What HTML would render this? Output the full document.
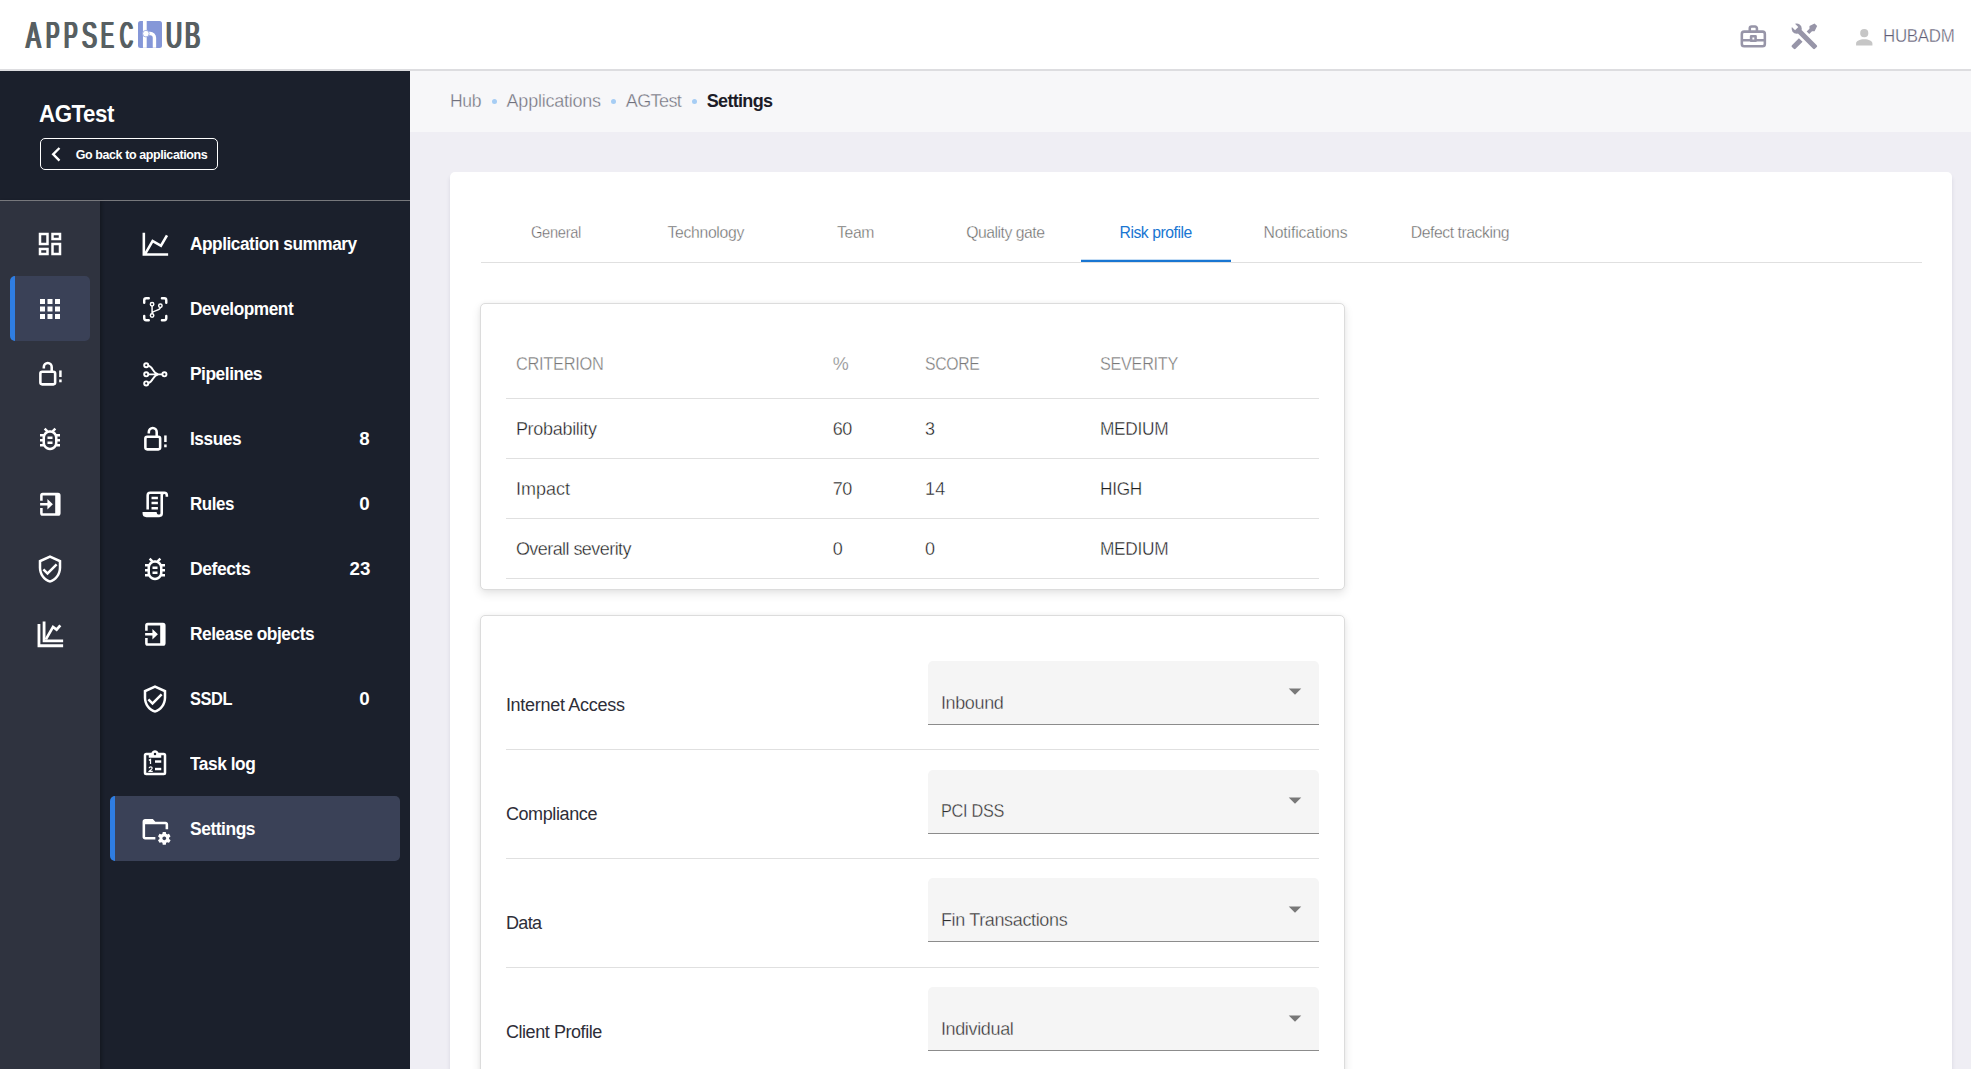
<!DOCTYPE html>
<html lang="en">
<head>
<meta charset="utf-8">
<title>AppSec.Hub - Settings</title>
<style>
*{box-sizing:border-box;margin:0;padding:0}
html,body{width:1971px;height:1069px;overflow:hidden}
body{font-family:"Liberation Sans",sans-serif;background:#efeef4;color:#333;position:relative}
.abs{position:absolute}
#hdr{left:0;top:0;width:1971px;height:69px;background:#fff}
#hdrline{left:0;top:69px;width:1971px;height:2px;background:#dddde0}
#side{left:0;top:71px;width:410px;height:998px;background:#1b202c}
#mini{left:0;top:201px;width:100px;height:868px;background:#2f333f;box-shadow:2px 0 3px rgba(0,0,0,.25)}
#sideline{left:0;top:200px;width:410px;height:1px;background:#77787c}
#crumb{left:410px;top:71px;width:1561px;height:61px;background:#f7f7f9}
#card{left:450px;top:172px;width:1502px;height:920px;background:#fff;border-radius:5px;box-shadow:0 4px 4px rgba(40,40,80,.12)}
.t{position:absolute;white-space:nowrap;line-height:1}
.act{background:#3a4157;border-left:5px solid #2f7de1;border-radius:5px}
#backbtn{left:40px;top:138px;width:178px;height:32px;border:1px solid #fff;border-radius:5px}
.dot{width:5.4px;height:5.4px;border-radius:50%;background:#a6cdf4;top:98.6px}
#tabline{left:481px;top:262px;width:1441px;height:1px;background:#e0e0e0}
#tabact{left:1081px;top:260px;width:150px;height:2px;background:#1976d2;box-shadow:0 -1px 0 rgba(25,118,210,.25)}
.pcard{left:480px;width:865px;background:#fff;border:1px solid #dcdcdc;border-radius:5px;box-shadow:0 4px 10px rgba(0,0,0,.10),0 0 4px rgba(0,0,0,.04)}
.hl{left:506px;width:813px;height:1px;background:#e0e0e0}
.sel{left:928px;width:391px;height:64px;background:#f5f5f5;border-radius:5px 5px 0 0;border-bottom:1px solid #8c8c8c}
svg{position:absolute;overflow:visible}
.lg{position:absolute;top:17px;font-size:37.6px;line-height:1;color:#575f62;transform-origin:0 0;white-space:nowrap}
</style>
</head>
<body>
<div id="hdr" class="abs"></div>
<div id="hdrline" class="abs"></div>
<div id="side" class="abs"></div>
<div id="mini" class="abs"></div>
<div id="sideline" class="abs"></div>
<div id="crumb" class="abs"></div>
<div id="card" class="abs"></div>
<div class="abs act" style="left:10px;top:276px;width:80px;height:65px"></div>
<div class="abs act" style="left:110px;top:796px;width:290px;height:65px"></div>
<div id="backbtn" class="abs"></div>
<div class="abs dot" style="left:491.7px"></div>
<div class="abs dot" style="left:610.7px"></div>
<div class="abs dot" style="left:691.6px"></div>
<div id="tabline" class="abs"></div>
<div id="tabact" class="abs"></div>
<div class="abs pcard" style="top:303px;height:287px"></div>
<div class="abs pcard" style="top:615px;height:480px"></div>
<div class="abs hl" style="top:398px"></div>
<div class="abs hl" style="top:458px"></div>
<div class="abs hl" style="top:518px"></div>
<div class="abs hl" style="top:578px"></div>
<div class="abs hl" style="top:749px"></div>
<div class="abs hl" style="top:858px"></div>
<div class="abs hl" style="top:967px"></div>
<div class="abs sel" style="top:661px"></div>
<div class="abs sel" style="top:770px"></div>
<div class="abs sel" style="top:878px"></div>
<div class="abs sel" style="top:987px"></div>
<div class="abs" style="left:138px;top:21px;width:24.2px;height:26.8px;background:#8597d8;border-radius:2.5px"></div><svg style="left:138px;top:21px" width="25" height="27" viewBox="138 21 25 27"><rect x="142.95" y="21" width="3.75" height="26.8" fill="#fff"/><path d="M146.5 33.45H150.1A4.35 4.35 0 0 1 154.45 37.800V47.800" fill="none" stroke="#fff" stroke-width="3.4"/><circle cx="145.9" cy="33.650" r="3.300" fill="#fff" stroke="#8f9fdc" stroke-width="0.8"/></svg>
<div id="logo"><span class="lg" style="left:25.75px;transform:translateY(-0.25px) scaleX(0.588);text-shadow:1.62px 0 0 #575f62,-1.62px 0 0 #575f62">A</span><span class="lg" style="left:46.05px;transform:translateY(-0.25px) scaleX(0.535);text-shadow:1.78px 0 0 #575f62,-1.78px 0 0 #575f62">P</span><span class="lg" style="left:64.13px;transform:translateY(-0.25px) scaleX(0.540);text-shadow:1.76px 0 0 #575f62,-1.76px 0 0 #575f62">P</span><span class="lg" style="left:82.46px;transform:translateY(-0.25px) scaleX(0.595);text-shadow:1.60px 0 0 #575f62,-1.60px 0 0 #575f62">S</span><span class="lg" style="left:101.12px;transform:translateY(-0.25px) scaleX(0.510);text-shadow:1.86px 0 0 #575f62,-1.86px 0 0 #575f62">E</span><span class="lg" style="left:120.25px;transform:translateY(-0.25px) scaleX(0.475);text-shadow:2.00px 0 0 #575f62,-2.00px 0 0 #575f62">C</span></div><div id="logo2"><span class="lg" style="left:165.88px;transform:translateY(-0.25px) scaleX(0.590);text-shadow:1.61px 0 0 #575f62,-1.61px 0 0 #575f62">U</span><span class="lg" style="left:185.13px;transform:translateY(-0.25px) scaleX(0.605);text-shadow:1.57px 0 0 #575f62,-1.57px 0 0 #575f62">B</span></div>
<svg style="left:35.00px;top:229.00px" width="30" height="30" viewBox="0 0 24 24" fill="#fff"><path d="M19,5V7H15V5H19M9,5V11H5V5H9M19,13V19H15V13H19M9,17V19H5V17H9M21,3H13V9H21V3M11,3H3V13H11V3M21,11H13V21H21V11M11,15H3V21H11V15Z"/></svg>
<svg style="left:35.00px;top:294.00px" width="30" height="30" viewBox="0 0 24 24" fill="#fff"><path d="M16,20H20V16H16M16,14H20V10H16M10,8H14V4H10M16,8H20V4H16M10,14H14V10H10M4,14H8V10H4M4,20H8V16H4M10,20H14V16H10M4,8H8V4H4V8Z"/></svg>
<svg style="left:34.65px;top:358.65px" width="30.7" height="30.7" viewBox="0 0 24 24" fill="#fff"><g fill="none" stroke="#fff" stroke-width="2"><rect x="4.2" y="9.9" width="11.55" height="9.95" rx="1.4"/><path d="M6.9 7.35V6.200a3.080 3.080 0 0 1 6.160 0V9.900"/></g><rect x="18.9" y="8.95" width="1.95" height="5.15"/><rect x="18.900" y="16" width="1.950" height="2.200"/></svg>
<svg style="left:35.00px;top:424.00px" width="30" height="30" viewBox="0 0 24 24" fill="#fff"><path d="M20,8H17.19C16.74,7.2 16.12,6.5 15.37,6L17,4.41L15.59,3L13.42,5.17C12.96,5.06 12.5,5 12,5C11.5,5 11.05,5.06 10.59,5.17L8.41,3L7,4.41L8.62,6C7.87,6.5 7.26,7.21 6.81,8H4V10H6.09C6.03,10.33 6,10.66 6,11V12H4V14H6V15C6,15.34 6.03,15.67 6.09,16H4V18H6.81C8.47,20.87 12.14,21.84 15,20.18C15.91,19.66 16.67,18.9 17.19,18H20V16H17.91C17.97,15.67 18,15.34 18,15V14H20V12H18V11C18,10.66 17.97,10.33 17.91,10H20V8M16,15A4,4 0 0,1 12,19A4,4 0 0,1 8,15V11A4,4 0 0,1 12,7A4,4 0 0,1 16,11V15M14,10V12H10V10H14M10,14H14V16H10V14Z"/></svg>
<svg style="left:34.65px;top:488.65px" width="30.7" height="30.7" viewBox="0 0 24 24" fill="#fff"><path d="M6,3H18A2,2 0 0 1 20,5V19A2,2 0 0 1 18,21H6A2,2 0 0 1 4,19V14.8H6V19H15.8V5H6V9.1H4V5A2,2 0 0 1 6,3ZM4,11H9.7V7.9L14,12L9.7,16V13H4Z"/></svg>
<svg style="left:35.00px;top:554.00px" width="30" height="30" viewBox="0 0 24 24" fill="#fff"><path d="M21,11C21,16.55 17.16,21.74 12,23C6.84,21.74 3,16.55 3,11V5L12,1L21,5V11M12,21C15.75,20 19,15.54 19,11.22V6.3L12,3.18L5,6.3V11.22C5,15.54 8.25,20 12,21M10,17L6,13L7.41,11.59L10,14.17L16.59,7.58L18,9"/></svg>
<svg style="left:34.65px;top:618.65px" width="30.7" height="30.7" viewBox="0 0 24 24" fill="#fff"><path d="M2 4H4.2V19.8H22V22H2Z"/><path d="M6 2H8.200V16H22V18.200H6Z"/><path d="M8.5 16L14.100 6.200 16.900 8.300 19.800 5" fill="none" stroke="#fff" stroke-width="2.1"/></svg>
<svg style="left:139.65px;top:228.65px" width="30.7" height="30.7" viewBox="0 0 24 24" fill="#fff"><path d="M16,11.78L20.24,4.45L21.97,5.45L16.74,14.5L10.23,10.75L5.46,19H22V21H2V3H4V17.54L9.5,8L16,11.78Z"/></svg>
<svg style="left:139.65px;top:293.65px" width="30.7" height="30.7" viewBox="0 0 24 24" fill="#fff"><g fill="none" stroke="#fff" stroke-width="1.9" stroke-linecap="round" stroke-linejoin="round"><path d="M3.3 6.850V4.800a1.500 1.500 0 0 1 1.500-1.500H6.850M17.150 3.300h1.900a1.500 1.500 0 0 1 1.500 1.500V6.850M20.550 17.150v1.900a1.500 1.500 0 0 1-1.500 1.500H17.150M6.850 20.550H4.800a1.500 1.500 0 0 1-1.500-1.500V17.150"/></g><g fill="none" stroke="#fff" stroke-width="1.15"><circle cx="9.45" cy="8" r="1.35"/><circle cx="9.450" cy="16.800" r="1.350"/><circle cx="15.930" cy="9.250" r="1.350"/><path d="M9.450 9.350v6.100M15.800 10.600C15.800 13.700 9.450 12.300 9.450 15.300"/></g></svg>
<svg style="left:139.65px;top:358.65px" width="30.7" height="30.7" viewBox="0 0 24 24" fill="#fff"><g fill="none" stroke="#fff" stroke-width="1.5"><circle cx="4.86" cy="4.86" r="1.6"/><circle cx="4.860" cy="12" r="1.600"/><circle cx="4.860" cy="19.100" r="1.600"/><circle cx="19.100" cy="12" r="1.600"/><path d="M6.460 12H17.500M6.400 5.200C10.800 6 9.500 11.400 14.500 12M6.400 18.800C10.800 18 9.500 12.600 14.500 12"/></g></svg>
<svg style="left:139.65px;top:423.65px" width="30.7" height="30.7" viewBox="0 0 24 24" fill="#fff"><g fill="none" stroke="#fff" stroke-width="2"><rect x="4.2" y="9.9" width="11.55" height="9.95" rx="1.4"/><path d="M6.9 7.35V6.200a3.080 3.080 0 0 1 6.160 0V9.900"/></g><rect x="18.9" y="8.95" width="1.95" height="5.15"/><rect x="18.900" y="16" width="1.950" height="2.200"/></svg>
<svg style="left:139.65px;top:488.65px" width="30.7" height="30.7" viewBox="0 0 24 24" fill="#fff"><path d="M15,20A1,1 0 0,0 16,19V4H8A1,1 0 0,0 7,5V16H5V5A3,3 0 0,1 8,2H19A3,3 0 0,1 22,5V6H20V5A1,1 0 0,0 19,4A1,1 0 0,0 18,5V9L18,19A3,3 0 0,1 15,22H5A3,3 0 0,1 2,19V18H13A2,2 0 0,0 15,20M9,6H14V8H9V6M9,10H14V12H9V10M9,14H14V16H9V14Z"/></svg>
<svg style="left:140.00px;top:554.00px" width="30" height="30" viewBox="0 0 24 24" fill="#fff"><path d="M20,8H17.19C16.74,7.2 16.12,6.5 15.37,6L17,4.41L15.59,3L13.42,5.17C12.96,5.06 12.5,5 12,5C11.5,5 11.05,5.06 10.59,5.17L8.41,3L7,4.41L8.62,6C7.87,6.5 7.26,7.21 6.81,8H4V10H6.09C6.03,10.33 6,10.66 6,11V12H4V14H6V15C6,15.34 6.03,15.67 6.09,16H4V18H6.81C8.47,20.87 12.14,21.84 15,20.18C15.91,19.66 16.67,18.9 17.19,18H20V16H17.91C17.97,15.67 18,15.34 18,15V14H20V12H18V11C18,10.66 17.97,10.33 17.91,10H20V8M16,15A4,4 0 0,1 12,19A4,4 0 0,1 8,15V11A4,4 0 0,1 12,7A4,4 0 0,1 16,11V15M14,10V12H10V10H14M10,14H14V16H10V14Z"/></svg>
<svg style="left:139.65px;top:618.65px" width="30.7" height="30.7" viewBox="0 0 24 24" fill="#fff"><path d="M6,3H18A2,2 0 0 1 20,5V19A2,2 0 0 1 18,21H6A2,2 0 0 1 4,19V14.8H6V19H15.8V5H6V9.1H4V5A2,2 0 0 1 6,3ZM4,11H9.7V7.9L14,12L9.7,16V13H4Z"/></svg>
<svg style="left:140.00px;top:684.00px" width="30" height="30" viewBox="0 0 24 24" fill="#fff"><path d="M21,11C21,16.55 17.16,21.74 12,23C6.84,21.74 3,16.55 3,11V5L12,1L21,5V11M12,21C15.75,20 19,15.54 19,11.22V6.3L12,3.18L5,6.3V11.22C5,15.54 8.25,20 12,21M10,17L6,13L7.41,11.59L10,14.17L16.59,7.58L18,9"/></svg>
<svg style="left:140.00px;top:749.00px" width="30" height="30" viewBox="0 0 24 24" fill="#fff"><path d="M19,3H14.82C14.4,1.84 13.3,1 12,1C10.7,1 9.6,1.84 9.18,3H5A2,2 0 0,0 3,5V19A2,2 0 0,0 5,21H19A2,2 0 0,0 21,19V5A2,2 0 0,0 19,3M12,3A1,1 0 0,1 13,4A1,1 0 0,1 12,5A1,1 0 0,1 11,4A1,1 0 0,1 12,3M7,7H17V5H19V19H5V5H7V7Z"/><rect x="12" y="9.05" width="5" height="1.95"/><rect x="12" y="15.050" width="5" height="1.950"/><g fill="none" stroke="#fff" stroke-width="1"><path d="M7.1 9.1L8.400 8.300V12.050"/><path d="M7.400 15.300C7.400 14 9.800 14 9.700 15.400C9.600 16.300 8.200 17 7.500 17.800H10.200"/></g></svg>
<svg style="left:139.65px;top:813.65px" width="30.7" height="30.7" viewBox="0 0 24 24" fill="#fff"><path d="M4 4C2.89 4 2 4.89 2 6V18C2 19.11 2.9 20 4 20H12V18H4V8H20V12H22V8C22 6.89 21.1 6 20 6H12L10 4M18 14C17.87 14 17.76 14.09 17.74 14.21L17.55 15.53C17.25 15.66 16.96 15.82 16.7 16L15.46 15.5C15.35 15.5 15.22 15.5 15.15 15.63L14.15 17.36C14.09 17.47 14.11 17.6 14.21 17.68L15.27 18.5C15.25 18.67 15.24 18.83 15.24 19C15.24 19.17 15.25 19.33 15.27 19.5L14.21 20.32C14.12 20.4 14.09 20.53 14.15 20.64L15.15 22.37C15.21 22.5 15.34 22.5 15.46 22.5L16.7 22C16.96 22.18 17.24 22.35 17.55 22.47L17.74 23.79C17.76 23.91 17.86 24 18 24H20C20.11 24 20.22 23.91 20.24 23.79L20.43 22.47C20.73 22.34 21 22.18 21.27 22L22.5 22.5C22.63 22.5 22.76 22.5 22.83 22.37L23.83 20.64C23.89 20.53 23.86 20.4 23.77 20.32L22.7 19.5C22.72 19.33 22.74 19.17 22.74 19C22.74 18.83 22.73 18.67 22.7 18.5L23.76 17.68C23.85 17.6 23.88 17.47 23.82 17.36L22.82 15.63C22.76 15.5 22.63 15.5 22.5 15.5L21.27 16C21 15.82 20.73 15.65 20.42 15.53L20.23 14.21C20.22 14.09 20.11 14 20 14M19 17.5C19.83 17.5 20.5 18.17 20.5 19C20.5 19.83 19.83 20.5 19 20.5C18.16 20.5 17.5 19.83 17.5 19C17.5 18.17 18.17 17.5 19 17.5Z"/></svg>
<svg style="left:41.90px;top:139.85px" width="28.5" height="28.5" viewBox="0 0 24 24" fill="#fff"><path d="M15.41,16.58L10.83,12L15.41,7.41L14,6L8,12L14,18L15.41,16.58Z"/></svg>
<svg style="left:1738.35px;top:20.75px" width="30.7" height="30.7" viewBox="0 0 24 24" fill="#9795a8"><g fill="none" stroke="#9795a8" stroke-width="2" stroke-linejoin="round"><rect x="3" y="8.3" width="18" height="11.4" rx="1.8"/><path d="M9.2 8.3V5.800a1.500 1.500 0 0 1 1.500-1.500h2.600a1.500 1.500 0 0 1 1.500 1.500V8.300M3 15H10.250M13.750 15H21"/><rect x="10.250" y="11.950" width="3.500" height="3.500"/></g></svg>
<svg style="left:1788.55px;top:20.55px" width="30.7" height="30.7" viewBox="0 0 24 24" fill="#9795a8"><path d="M21.71 20.29L20.29 21.71A1 1 0 0 1 18.88 21.71L7 9.85A3.81 3.81 0 0 1 6 10A4 4 0 0 1 2.22 4.7L4.76 7.24L5.29 6.71L6.71 5.29L7.24 4.76L4.7 2.22A4 4 0 0 1 10 6A3.81 3.81 0 0 1 9.85 7L21.71 18.88A1 1 0 0 1 21.71 20.29M2.29 18.88A1 1 0 0 0 2.29 20.29L3.71 21.71A1 1 0 0 0 5.12 21.71L10.59 16.25L7.76 13.42M20 2L16 4V6L13.83 8.17L15.83 10.17L18 8H20L22 4Z"/></svg>
<svg style="left:1851.75px;top:24.65px" width="24.5" height="24.5" viewBox="0 0 24 24" fill="#c6c6c6"><path d="M12,4A4,4 0 0,1 16,8A4,4 0 0,1 12,12A4,4 0 0,1 8,8A4,4 0 0,1 12,4M12,14C16.42,14 20,15.79 20,18V20H4V18C4,15.79 7.58,14 12,14Z"/></svg>
<svg style="left:1280.00px;top:676.30px" width="30" height="30" viewBox="0 0 24 24" fill="#787878"><path d="M7,10L12,15L17,10H7Z"/></svg>
<svg style="left:1280.00px;top:785.05px" width="30" height="30" viewBox="0 0 24 24" fill="#787878"><path d="M7,10L12,15L17,10H7Z"/></svg>
<svg style="left:1280.00px;top:893.80px" width="30" height="30" viewBox="0 0 24 24" fill="#787878"><path d="M7,10L12,15L17,10H7Z"/></svg>
<svg style="left:1280.00px;top:1002.55px" width="30" height="30" viewBox="0 0 24 24" fill="#787878"><path d="M7,10L12,15L17,10H7Z"/></svg>
<span class="t" style="left:1882.9px;top:27px;font-size:18px;color:#5f5c75;letter-spacing:-0.32px;transform-origin:0 50%;transform:scaleX(0.9393);-webkit-text-stroke:0.35px #fff;">HUBADM</span>
<span class="t" style="left:39.1px;top:102px;font-size:24px;color:#fff;font-weight:700;letter-spacing:-0.48px;transform-origin:0 50%;transform:scaleX(0.9284);">AGTest</span>
<span class="t" style="left:75.7px;top:149px;font-size:12.5px;color:#fff;font-weight:700;letter-spacing:-0.41px;">Go back to applications</span>
<span class="t" style="left:189.8px;top:235px;font-size:18.75px;color:#fff;font-weight:700;letter-spacing:-0.49px;transform-origin:0 50%;transform:scaleX(0.9195);">Application summary</span>
<span class="t" style="left:189.8px;top:300px;font-size:18.75px;color:#fff;font-weight:700;letter-spacing:-0.49px;transform-origin:0 50%;transform:scaleX(0.9183);">Development</span>
<span class="t" style="left:189.8px;top:365px;font-size:18.75px;color:#fff;font-weight:700;letter-spacing:-0.49px;transform-origin:0 50%;transform:scaleX(0.9247);">Pipelines</span>
<span class="t" style="left:189.8px;top:430px;font-size:18.75px;color:#fff;font-weight:700;letter-spacing:-0.49px;transform-origin:0 50%;transform:scaleX(0.9212);">Issues</span>
<span class="t" style="left:359.2px;top:430px;font-size:18.75px;color:#fff;font-weight:700;">8</span>
<span class="t" style="left:189.8px;top:495px;font-size:18.75px;color:#fff;font-weight:700;letter-spacing:-0.50px;transform-origin:0 50%;transform:scaleX(0.9033);">Rules</span>
<span class="t" style="left:359.2px;top:495px;font-size:18.75px;color:#fff;font-weight:700;">0</span>
<span class="t" style="left:189.8px;top:560px;font-size:18.75px;color:#fff;font-weight:700;letter-spacing:-0.48px;transform-origin:0 50%;transform:scaleX(0.9362);">Defects</span>
<span class="t" style="left:349.4px;top:560px;font-size:18.75px;color:#fff;font-weight:700;letter-spacing:0.17px;">23</span>
<span class="t" style="left:189.8px;top:625px;font-size:18.75px;color:#fff;font-weight:700;letter-spacing:-0.49px;transform-origin:0 50%;transform:scaleX(0.9243);">Release objects</span>
<span class="t" style="left:189.8px;top:690px;font-size:18.75px;color:#fff;font-weight:700;letter-spacing:-0.51px;transform-origin:0 50%;transform:scaleX(0.8752);">SSDL</span>
<span class="t" style="left:359.2px;top:690px;font-size:18.75px;color:#fff;font-weight:700;">0</span>
<span class="t" style="left:189.8px;top:755px;font-size:18.75px;color:#fff;font-weight:700;letter-spacing:-0.49px;transform-origin:0 50%;transform:scaleX(0.9237);">Task log</span>
<span class="t" style="left:189.8px;top:820px;font-size:18.75px;color:#fff;font-weight:700;letter-spacing:-0.48px;transform-origin:0 50%;transform:scaleX(0.9284);">Settings</span>
<span class="t" style="left:449.9px;top:92px;font-size:18px;color:#70707c;letter-spacing:-0.31px;transform-origin:0 50%;transform:scaleX(0.9742);-webkit-text-stroke:0.35px #f7f7f9;">Hub</span>
<span class="t" style="left:506.6px;top:92px;font-size:18px;color:#70707c;letter-spacing:-0.23px;-webkit-text-stroke:0.35px #f7f7f9;">Applications</span>
<span class="t" style="left:625.8px;top:92px;font-size:18px;color:#70707c;letter-spacing:-0.59px;-webkit-text-stroke:0.35px #f7f7f9;">AGTest</span>
<span class="t" style="left:706.8px;top:92px;font-size:18px;color:#1c1c28;font-weight:700;letter-spacing:-0.69px;">Settings</span>
<span class="t" style="left:530.8px;top:225px;font-size:15.75px;color:#666;letter-spacing:-0.32px;transform-origin:0 50%;transform:scaleX(0.9304);-webkit-text-stroke:0.35px #fff;">General</span>
<span class="t" style="left:667.5px;top:225px;font-size:15.75px;color:#666;letter-spacing:-0.32px;-webkit-text-stroke:0.35px #fff;">Technology</span>
<span class="t" style="left:837.1px;top:225px;font-size:15.75px;color:#666;letter-spacing:-0.42px;-webkit-text-stroke:0.35px #fff;">Team</span>
<span class="t" style="left:966.2px;top:225px;font-size:15.75px;color:#666;letter-spacing:-0.48px;-webkit-text-stroke:0.35px #fff;">Quality gate</span>
<span class="t" style="left:1119.5px;top:225px;font-size:15.75px;color:#1976d2;letter-spacing:-0.46px;">Risk profile</span>
<span class="t" style="left:1263.5px;top:225px;font-size:15.75px;color:#666;letter-spacing:-0.14px;-webkit-text-stroke:0.35px #fff;">Notifications</span>
<span class="t" style="left:1410.8px;top:225px;font-size:15.75px;color:#666;letter-spacing:-0.45px;-webkit-text-stroke:0.35px #fff;">Defect tracking</span>
<span class="t" style="left:515.5px;top:355px;font-size:18px;color:#787878;letter-spacing:-0.33px;transform-origin:0 50%;transform:scaleX(0.9109);-webkit-text-stroke:0.35px #fff;">CRITERION</span>
<span class="t" style="left:832.8px;top:355px;font-size:18px;color:#787878;-webkit-text-stroke:0.35px #fff;">%</span>
<span class="t" style="left:925.1px;top:355px;font-size:18px;color:#787878;letter-spacing:-0.34px;transform-origin:0 50%;transform:scaleX(0.8760);-webkit-text-stroke:0.35px #fff;">SCORE</span>
<span class="t" style="left:1099.9px;top:355px;font-size:18px;color:#787878;letter-spacing:-0.33px;transform-origin:0 50%;transform:scaleX(0.9028);-webkit-text-stroke:0.35px #fff;">SEVERITY</span>
<span class="t" style="left:515.9px;top:420px;font-size:18px;color:#1c1c1c;letter-spacing:-0.30px;-webkit-text-stroke:0.35px #fff;">Probability</span>
<span class="t" style="left:832.8px;top:420px;font-size:18px;color:#1c1c1c;letter-spacing:-0.65px;-webkit-text-stroke:0.35px #fff;">60</span>
<span class="t" style="left:925.1px;top:420px;font-size:18px;color:#1c1c1c;-webkit-text-stroke:0.35px #fff;">3</span>
<span class="t" style="left:1099.9px;top:420px;font-size:18px;color:#1c1c1c;letter-spacing:-0.31px;transform-origin:0 50%;transform:scaleX(0.9614);-webkit-text-stroke:0.35px #fff;">MEDIUM</span>
<span class="t" style="left:515.9px;top:480px;font-size:18px;color:#1c1c1c;-webkit-text-stroke:0.35px #fff;">Impact</span>
<span class="t" style="left:832.8px;top:480px;font-size:18px;color:#1c1c1c;letter-spacing:-0.65px;-webkit-text-stroke:0.35px #fff;">70</span>
<span class="t" style="left:925.1px;top:480px;font-size:18px;color:#1c1c1c;letter-spacing:0.15px;-webkit-text-stroke:0.35px #fff;">14</span>
<span class="t" style="left:1099.9px;top:480px;font-size:18px;color:#1c1c1c;letter-spacing:-0.31px;transform-origin:0 50%;transform:scaleX(0.9573);-webkit-text-stroke:0.35px #fff;">HIGH</span>
<span class="t" style="left:515.9px;top:540px;font-size:18px;color:#1c1c1c;letter-spacing:-0.56px;-webkit-text-stroke:0.35px #fff;">Overall severity</span>
<span class="t" style="left:832.8px;top:540px;font-size:18px;color:#1c1c1c;-webkit-text-stroke:0.35px #fff;">0</span>
<span class="t" style="left:925.1px;top:540px;font-size:18px;color:#1c1c1c;-webkit-text-stroke:0.35px #fff;">0</span>
<span class="t" style="left:1099.9px;top:540px;font-size:18px;color:#1c1c1c;letter-spacing:-0.31px;transform-origin:0 50%;transform:scaleX(0.9614);-webkit-text-stroke:0.35px #fff;">MEDIUM</span>
<span class="t" style="left:505.9px;top:696px;font-size:18px;color:#2e2e38;letter-spacing:-0.29px;">Internet Access</span>
<span class="t" style="left:940.9px;top:694px;font-size:18px;color:#2e2e2e;letter-spacing:-0.35px;-webkit-text-stroke:0.35px #f5f5f5;">Inbound</span>
<span class="t" style="left:505.9px;top:805px;font-size:18px;color:#2e2e38;letter-spacing:-0.39px;">Compliance</span>
<span class="t" style="left:940.9px;top:802px;font-size:18px;color:#2e2e2e;letter-spacing:-0.33px;transform-origin:0 50%;transform:scaleX(0.9035);-webkit-text-stroke:0.35px #f5f5f5;">PCI DSS</span>
<span class="t" style="left:505.9px;top:914px;font-size:18px;color:#2e2e38;letter-spacing:-0.62px;">Data</span>
<span class="t" style="left:940.9px;top:911px;font-size:18px;color:#2e2e2e;letter-spacing:-0.35px;-webkit-text-stroke:0.35px #f5f5f5;">Fin Transactions</span>
<span class="t" style="left:505.9px;top:1023px;font-size:18px;color:#2e2e38;letter-spacing:-0.43px;">Client Profile</span>
<span class="t" style="left:940.9px;top:1020px;font-size:18px;color:#2e2e2e;letter-spacing:-0.35px;-webkit-text-stroke:0.35px #f5f5f5;">Individual</span>
</body>
</html>
